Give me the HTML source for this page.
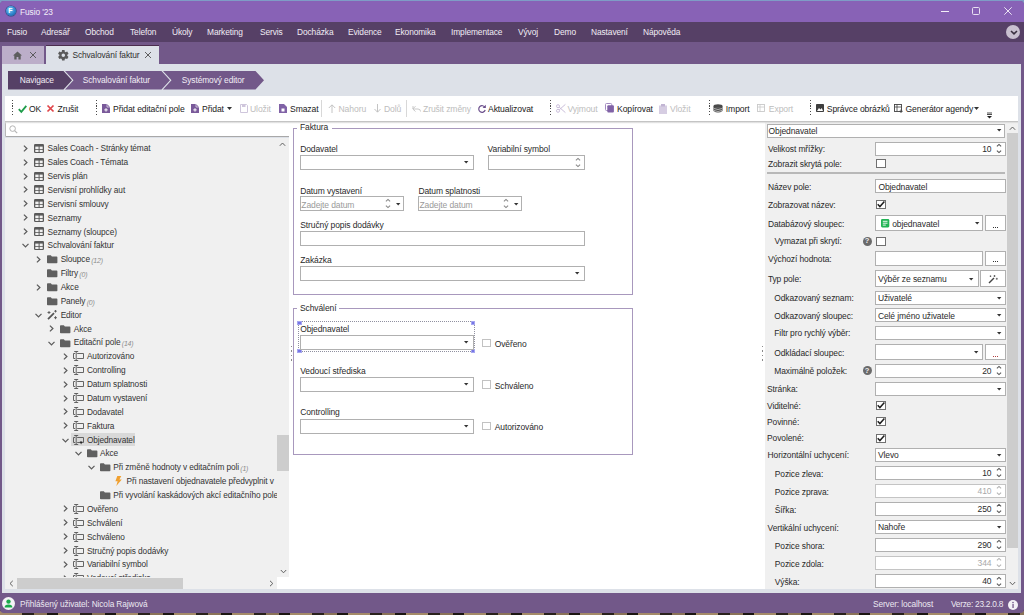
<!DOCTYPE html>
<html><head><meta charset="utf-8"><style>
*{box-sizing:border-box;margin:0;padding:0}
html,body{width:1024px;height:615px;overflow:hidden;background:linear-gradient(#82a6d0 0,#82a6d0 8px,#3b3028 8px)}
body{font-family:"Liberation Sans",sans-serif;font-size:8.3px;letter-spacing:-0.1px;color:#1e1e1e;position:relative}
.a{position:absolute}
.t{position:absolute;white-space:nowrap;line-height:10px}
svg{position:absolute;overflow:visible}
</style></head><body>
<div class="a" style="left:0px;top:0px;width:1024px;height:2px;background:#7f9cc6;"></div>
<div class="a" style="left:0px;top:611px;width:1024px;height:4px;background:repeating-linear-gradient(90deg,#a48a68 0 22px,#2a221c 22px 34px,#8a7258 34px 47px,#1c1612 47px 58px);"></div>
<div class="a" style="left:0;top:1px;width:1024px;height:612px;background:#725889;border-radius:4px;overflow:hidden">
</div>
<div class="a" style="left:0px;top:1px;width:1024px;height:21px;background:#8862b6;border-radius:4px 4px 0 0"></div>
<div class="a" style="left:5.5px;top:6px;width:10px;height:10px;border-radius:50%;background:radial-gradient(circle at 40% 35%,#7cc8f5,#2a80c8 60%,#17508a);box-shadow:0 0 0 0.6px #1d4e7c;"></div>
<div class="t" style="left:8.3px;top:6.45px;color:#fff;font-size:7px;font-weight:bold">F</div>
<div class="t" style="left:20px;top:6.55px;color:#f3eff8;font-size:8.4px;">Fusio '23</div>
<div class="a" style="left:941px;top:11px;width:7.5px;height:1px;background:#f3eff8;"></div>
<div class="a" style="left:972.2px;top:7.2px;width:7.8px;height:7.6px;border:1px solid #e8e0f2;border-radius:1.6px"></div>
<svg style="left:1004px;top:6.9px" width="8" height="8"><path d="M0.3 0.3L7.7 7.7M7.7 0.3L0.3 7.7" stroke="#ebe4f3" stroke-width="1"/></svg>
<div class="a" style="left:0px;top:22px;width:1024px;height:20px;background:#564066;"></div>
<div class="t" style="left:7px;top:26.85px;color:#f1edf5;font-size:8.4px;">Fusio</div>
<div class="t" style="left:41px;top:26.85px;color:#f1edf5;font-size:8.4px;">Adresář</div>
<div class="t" style="left:85px;top:26.85px;color:#f1edf5;font-size:8.4px;">Obchod</div>
<div class="t" style="left:130px;top:26.85px;color:#f1edf5;font-size:8.4px;">Telefon</div>
<div class="t" style="left:172px;top:26.85px;color:#f1edf5;font-size:8.4px;">Úkoly</div>
<div class="t" style="left:207px;top:26.85px;color:#f1edf5;font-size:8.4px;">Marketing</div>
<div class="t" style="left:260px;top:26.85px;color:#f1edf5;font-size:8.4px;">Servis</div>
<div class="t" style="left:297px;top:26.85px;color:#f1edf5;font-size:8.4px;">Docházka</div>
<div class="t" style="left:348px;top:26.85px;color:#f1edf5;font-size:8.4px;">Evidence</div>
<div class="t" style="left:395px;top:26.85px;color:#f1edf5;font-size:8.4px;">Ekonomika</div>
<div class="t" style="left:451px;top:26.85px;color:#f1edf5;font-size:8.4px;">Implementace</div>
<div class="t" style="left:518px;top:26.85px;color:#f1edf5;font-size:8.4px;">Vývoj</div>
<div class="t" style="left:554px;top:26.85px;color:#f1edf5;font-size:8.4px;">Demo</div>
<div class="t" style="left:591px;top:26.85px;color:#f1edf5;font-size:8.4px;">Nastavení</div>
<div class="t" style="left:643px;top:26.85px;color:#f1edf5;font-size:8.4px;">Nápověda</div>
<div class="a" style="left:1006px;top:25px;width:14px;height:14px;border-radius:50%;background:#c9c0d0"></div>
<svg style="left:1009.5px;top:30.2px" width="8" height="5"><path d="M1 1L4 3.8L7 1" stroke="#3a3040" stroke-width="1.6" fill="none"/></svg>
<div class="a" style="left:0px;top:42px;width:1024px;height:22px;background:#725889;"></div>
<div class="a" style="left:2px;top:46px;width:42px;height:18px;background:#bcaec9;"></div>
<svg style="left:13px;top:50.8px" width="9" height="9"><path d="M4.5 0.5L0 4.5H1.3V8.5H3.6V6H5.4V8.5H7.7V4.5H9Z" fill="#5d5d5d"/></svg>
<svg style="left:29.5px;top:52.2px" width="6" height="6"><path d="M0 0L6 6M6 0L0 6" stroke="#505050" stroke-width="0.9"/></svg>
<div class="a" style="left:46px;top:45px;width:113px;height:19px;background:#dde1e8;border-top:1.5px solid #4b2d4e"></div>
<svg style="left:57.8px;top:49.8px" width="10.6" height="10.6" viewBox="2.4 2.4 19.2 19.2"><path fill="#5a5a5a" d="M19.14 12.94c.04-.3.06-.61.06-.94 0-.32-.02-.64-.07-.94l2.03-1.58a.49.49 0 0 0 .12-.61l-1.92-3.32a.49.49 0 0 0-.59-.22l-2.39.96c-.5-.38-1.03-.7-1.62-.94L14.4 2.81a.48.48 0 0 0-.48-.41h-3.84a.47.47 0 0 0-.47.41L9.25 5.35c-.59.24-1.13.57-1.62.94l-2.39-.96a.48.48 0 0 0-.59.22L2.74 8.87a.47.47 0 0 0 .12.61l2.03 1.58c-.05.3-.09.63-.09.94s.02.64.07.94l-2.03 1.58a.49.49 0 0 0-.12.61l1.92 3.32c.12.22.37.29.59.22l2.39-.96c.5.38 1.03.7 1.62.94l.36 2.54c.05.24.24.41.48.41h3.84c.24 0 .44-.17.47-.41l.36-2.54c.59-.24 1.13-.56 1.62-.94l2.39.96c.22.08.47 0 .59-.22l1.92-3.32a.47.47 0 0 0-.12-.61zM12 15.2a3.2 3.2 0 1 1 0-6.4 3.2 3.2 0 0 1 0 6.4z"/></svg>
<div class="t" style="left:72.4px;top:49.95px;color:#303030;font-size:8.4px;">Schvalování faktur</div>
<svg style="left:145px;top:52px" width="6" height="6"><path d="M0 0L6 6M6 0L0 6" stroke="#505050" stroke-width="0.9"/></svg>
<div class="a" style="left:2px;top:64px;width:1019px;height:529px;background:#dde1e8;"></div>
<div class="a" style="left:0px;top:593px;width:1024px;height:20px;background:#725889;border-radius:0 0 7px 7px"></div>
<div class="a" style="left:2px;top:597px;width:13px;height:13px;border-radius:50%;background:#f4f2f6"></div>
<svg style="left:4px;top:599px" width="9" height="9"><circle cx="4.5" cy="2.6" r="2.2" fill="#1aa94a"/><path d="M0.6 8.6Q0.6 5.6 4.5 5.6Q8.4 5.6 8.4 8.6Z" fill="#1aa94a"/></svg>
<div class="t" style="left:20px;top:599.35px;color:#ece8f1;font-size:8.3px;">Přihlášený uživatel: Nicola Rajwová</div>
<div class="t" style="left:873px;top:599.35px;color:#ece8f1;font-size:8.3px;">Server: localhost</div>
<div class="t" style="left:951px;top:599.35px;color:#ece8f1;font-size:8.3px;letter-spacing:-0.25px">Verze: 23.2.0.8</div>
<div class="a" style="left:1007.5px;top:599.5px;width:10px;height:10px;border-radius:50%;background:#f4f2f6"></div>
<svg style="left:1007.5px;top:599.5px" width="10" height="10"><rect x="4.4" y="4" width="1.3" height="4" fill="#725889"/><circle cx="5" cy="2.6" r="0.8" fill="#725889"/></svg>
<svg style="left:0;top:0" width="300" height="100"><path d="M8 71H63.5L72 80.25L63.5 89.5H8Z" fill="#564066"/><path d="M65 71H161.5L170 80.25L161.5 89.5H65L73.5 80.25Z" fill="#725889"/><path d="M163 71H255.5L264 80.25L255.5 89.5H163L171.5 80.25Z" fill="#725889"/></svg>
<div class="t" style="left:19.8px;top:74.95px;color:#f1edf5;font-size:8.4px;">Navigace</div>
<div class="t" style="left:82.8px;top:74.95px;color:#f1edf5;font-size:8.4px;">Schvalování faktur</div>
<div class="t" style="left:181.8px;top:74.95px;color:#f1edf5;font-size:8.4px;">Systémový editor</div>
<div class="a" style="left:5px;top:96px;width:1013px;height:25px;background:#ffffff;"></div>
<div class="a" style="left:11.5px;top:100px;width:1.1px;height:16px;background:repeating-linear-gradient(#4a4a4a 0 1.1px,transparent 1.1px 2.7px)"></div>
<div class="a" style="left:96.0px;top:100px;width:1.1px;height:16px;background:repeating-linear-gradient(#4a4a4a 0 1.1px,transparent 1.1px 2.7px)"></div>
<div class="a" style="left:550.3px;top:100px;width:1.1px;height:16px;background:repeating-linear-gradient(#4a4a4a 0 1.1px,transparent 1.1px 2.7px)"></div>
<div class="a" style="left:708.5px;top:100px;width:1.1px;height:16px;background:repeating-linear-gradient(#4a4a4a 0 1.1px,transparent 1.1px 2.7px)"></div>
<div class="a" style="left:809.5px;top:100px;width:1.1px;height:16px;background:repeating-linear-gradient(#4a4a4a 0 1.1px,transparent 1.1px 2.7px)"></div>
<div class="a" style="left:321px;top:100px;width:1px;height:17px;background:#d8d8d8;"></div>
<div class="a" style="left:406px;top:100px;width:1px;height:17px;background:#d8d8d8;"></div>
<svg style="left:17.5px;top:104.5px" width="9" height="8"><path d="M0.8 4.2L3.3 6.8L8.3 0.8" stroke="#1f9d4a" stroke-width="1.8" fill="none"/></svg>
<div class="t" style="left:29px;top:103.75px;color:#222;font-size:8.6px;">OK</div>
<svg style="left:47px;top:105px" width="7" height="7"><path d="M0.5 0.5L6.5 6.5M6.5 0.5L0.5 6.5" stroke="#e0454a" stroke-width="1.7"/></svg>
<div class="t" style="left:57.5px;top:103.75px;color:#222;font-size:8.6px;">Zrušit</div>
<svg style="left:102px;top:104px" width="8" height="9"><path d="M0 0H5L8 3V9H0Z" fill="#7a5a9a"/><path d="M5 0V3H8" fill="none" stroke="#fff" stroke-width="0.6"/><path d="M4 4.2V7.6M2.3 5.9H5.7" stroke="#fff" stroke-width="1"/></svg>
<div class="t" style="left:113px;top:103.75px;color:#222;font-size:8.6px;">Přidat editační pole</div>
<svg style="left:191px;top:104px" width="8" height="9"><path d="M0 0H5L8 3V9H0Z" fill="#7a5a9a"/><path d="M5 0V3H8" fill="none" stroke="#fff" stroke-width="0.6"/><path d="M4 4.2V7.6M2.3 5.9H5.7" stroke="#fff" stroke-width="1"/></svg>
<div class="t" style="left:202px;top:103.75px;color:#222;font-size:8.6px;">Přidat</div>
<svg style="left:227px;top:107px" width="5" height="3"><path d="M0 0H5L2.5 3Z" fill="#333"/></svg>
<svg style="left:240px;top:104px" width="8" height="9"><path d="M0.5 0.5H6.5L7.5 1.5V8.5H0.5Z" fill="none" stroke="#cfc6dc" stroke-width="1"/><rect x="2" y="0.5" width="3.5" height="2.5" fill="#cfc6dc"/></svg>
<div class="t" style="left:250px;top:103.75px;color:#bdbdbd;font-size:8.6px;">Uložit</div>
<svg style="left:279px;top:104px" width="8" height="9"><path d="M0 0H5L8 3V9H0Z" fill="#8062a6"/><rect x="2.5" y="4.5" width="3" height="3" fill="#fff"/></svg>
<div class="t" style="left:290px;top:103.75px;color:#222;font-size:8.6px;">Smazat</div>
<svg style="left:328px;top:104px" width="8" height="9"><path d="M4 9V1M0.8 4L4 0.8L7.2 4" stroke="#bdbdbd" stroke-width="0.9" fill="none"/></svg>
<div class="t" style="left:338.5px;top:103.75px;color:#bdbdbd;font-size:8.6px;">Nahoru</div>
<svg style="left:373.5px;top:104px" width="7" height="9"><path d="M3.5 0V8M0.5 5L3.5 8.2L6.5 5" stroke="#bdbdbd" stroke-width="0.9" fill="none"/></svg>
<div class="t" style="left:384px;top:103.75px;color:#bdbdbd;font-size:8.6px;">Dolů</div>
<svg style="left:411.5px;top:105px" width="9" height="7"><path d="M1 1V4H6Q8.5 4 8.5 6.5M0.8 4L3.5 1.2M0.8 4L3.5 6.5" stroke="#c3c3c3" stroke-width="0.9" fill="none"/></svg>
<div class="t" style="left:423px;top:103.75px;color:#bdbdbd;font-size:8.6px;">Zrušit změny</div>
<svg style="left:477.5px;top:104px" width="8" height="9"><path d="M7 3.5A3.3 3.3 0 1 0 7.2 6" stroke="#6b4f8c" stroke-width="1.2" fill="none"/><path d="M7.8 0.8V4H4.6Z" fill="#6b4f8c"/></svg>
<div class="t" style="left:488px;top:103.75px;color:#222;font-size:8.6px;">Aktualizovat</div>
<svg style="left:556px;top:103.8px" width="10" height="9"><circle cx="2" cy="2.2" r="1.5" stroke="#cbbfdb" fill="none" stroke-width="1"/><circle cx="2" cy="6.8" r="1.5" stroke="#cbbfdb" fill="none" stroke-width="1"/><path d="M3.2 3.2L9.4 8.6M3.2 5.8L9.4 0.4" stroke="#cbbfdb" stroke-width="1"/></svg>
<div class="t" style="left:567.5px;top:103.75px;color:#bdbdbd;font-size:8.6px;">Vyjmout</div>
<svg style="left:605px;top:103.2px" width="10" height="10"><rect x="0.5" y="0.5" width="6.2" height="7" rx="1" fill="none" stroke="#a48cc2" stroke-width="1"/><rect x="2.3" y="2.3" width="6.6" height="7.2" rx="1" fill="#8062a6"/></svg>
<div class="t" style="left:617px;top:103.75px;color:#222;font-size:8.6px;">Kopírovat</div>
<svg style="left:659px;top:103.5px" width="8" height="10"><rect x="0" y="1.5" width="8" height="8.5" fill="#d6cde2"/><rect x="2" y="0" width="4" height="2.5" fill="#c2b5d3"/></svg>
<div class="t" style="left:670px;top:103.75px;color:#bdbdbd;font-size:8.6px;">Vložit</div>
<svg style="left:713px;top:104px" width="10" height="9"><ellipse cx="5" cy="2" rx="4.5" ry="1.8" fill="#4a4a4a"/><path d="M0.5 2V7Q5 10 9.5 7V2Q5 5 0.5 2Z" fill="#4a4a4a"/><path d="M1 4.5Q5 6.5 9 4.5M1 6.5Q5 8.5 9 6.5" stroke="#fff" stroke-width="0.6" fill="none"/></svg>
<div class="t" style="left:725.8px;top:103.75px;color:#222;font-size:8.6px;">Import</div>
<svg style="left:757px;top:104px" width="9" height="9"><rect x="0.5" y="0.5" width="7" height="7" fill="none" stroke="#c9c9c9" stroke-width="0.9"/><path d="M0.5 3H7.5M3 0.5V7.5" stroke="#c9c9c9" stroke-width="0.8"/></svg>
<div class="t" style="left:768.8px;top:103.75px;color:#bdbdbd;font-size:8.6px;">Export</div>
<svg style="left:815.5px;top:104px" width="8" height="8"><rect x="0" y="0" width="8" height="8" rx="0.8" fill="#3e3e3e"/><path d="M1 7L3 4L4.5 5.5L5.8 4L7 7Z" fill="#fff"/></svg>
<div class="t" style="left:826.8px;top:103.75px;color:#222;font-size:8.6px;">Správce obrázků</div>
<svg style="left:893.8px;top:104px" width="9" height="9"><rect x="0.5" y="0.5" width="7" height="7" fill="none" stroke="#444" stroke-width="0.9"/><path d="M0.5 3H7.5M3 0.5V7.5" stroke="#444" stroke-width="0.8"/><path d="M7 5.5V9M5.3 7.3H8.7" stroke="#444" stroke-width="0.9"/></svg>
<div class="t" style="left:905.5px;top:103.75px;color:#222;font-size:8.6px;">Generátor agendy</div>
<svg style="left:973.5px;top:107px" width="5" height="3"><path d="M0 0H5L2.5 3Z" fill="#333"/></svg>
<svg style="left:986.5px;top:112.5px" width="5" height="6"><path d="M0 0H5M0 1.5H5" stroke="#222" stroke-width="0.8"/><path d="M0 3H5L2.5 5.5Z" fill="#222"/></svg>
<div class="a" style="left:5px;top:121px;width:284.5px;height:16px;background:#ffffff;border:1px solid #b8b8b8;border-bottom:1.4px solid #a8a8a8;border-radius:1.5px"></div>
<svg style="left:9px;top:125px" width="9" height="9"><circle cx="3.6" cy="3.6" r="2.8" stroke="#b4b4b4" stroke-width="1" fill="none"/><path d="M5.6 5.6L8.2 8.2" stroke="#b4b4b4" stroke-width="1.2"/></svg>
<div class="a" style="left:5px;top:138px;width:284px;height:451px;background:#f0f0f0;"></div>
<div class="a" style="left:5px;top:138px;width:272px;height:439px;overflow:hidden">
<div class="a" style="left:-5px;top:-138px;width:300px;height:600px">
<svg style="left:23.1px;top:144.8px" width="5" height="7"><path d="M0.9 0.6L3.9 3.5L0.9 6.4" stroke="#5c5c5c" stroke-width="1.25" fill="none"/></svg>
<svg style="left:34.0px;top:143.8px" width="10" height="9"><rect x="0" y="0" width="10" height="9" rx="1.2" fill="#5a5a5a"/><rect x="1.3" y="2.6" width="3.3" height="2.4" fill="#f0f0f0"/><rect x="5.6" y="2.6" width="3.1" height="2.4" fill="#f0f0f0"/><rect x="1.3" y="5.8" width="3.3" height="2.2" fill="#f0f0f0"/><rect x="5.6" y="5.8" width="3.1" height="2.2" fill="#f0f0f0"/></svg>
<div class="t" style="left:47.5px;top:143.30px;color:#333;font-size:8.3px;">Sales Coach - Stránky témat</div>
<svg style="left:23.1px;top:158.7px" width="5" height="7"><path d="M0.9 0.6L3.9 3.5L0.9 6.4" stroke="#5c5c5c" stroke-width="1.25" fill="none"/></svg>
<svg style="left:34.0px;top:157.7px" width="10" height="9"><rect x="0" y="0" width="10" height="9" rx="1.2" fill="#5a5a5a"/><rect x="1.3" y="2.6" width="3.3" height="2.4" fill="#f0f0f0"/><rect x="5.6" y="2.6" width="3.1" height="2.4" fill="#f0f0f0"/><rect x="1.3" y="5.8" width="3.3" height="2.2" fill="#f0f0f0"/><rect x="5.6" y="5.8" width="3.1" height="2.2" fill="#f0f0f0"/></svg>
<div class="t" style="left:47.5px;top:157.17px;color:#333;font-size:8.3px;">Sales Coach - Témata</div>
<svg style="left:23.1px;top:172.5px" width="5" height="7"><path d="M0.9 0.6L3.9 3.5L0.9 6.4" stroke="#5c5c5c" stroke-width="1.25" fill="none"/></svg>
<svg style="left:34.0px;top:171.5px" width="10" height="9"><rect x="0" y="0" width="10" height="9" rx="1.2" fill="#5a5a5a"/><rect x="1.3" y="2.6" width="3.3" height="2.4" fill="#f0f0f0"/><rect x="5.6" y="2.6" width="3.1" height="2.4" fill="#f0f0f0"/><rect x="1.3" y="5.8" width="3.3" height="2.2" fill="#f0f0f0"/><rect x="5.6" y="5.8" width="3.1" height="2.2" fill="#f0f0f0"/></svg>
<div class="t" style="left:47.5px;top:171.04px;color:#333;font-size:8.3px;">Servis plán</div>
<svg style="left:23.1px;top:186.4px" width="5" height="7"><path d="M0.9 0.6L3.9 3.5L0.9 6.4" stroke="#5c5c5c" stroke-width="1.25" fill="none"/></svg>
<svg style="left:34.0px;top:185.4px" width="10" height="9"><rect x="0" y="0" width="10" height="9" rx="1.2" fill="#5a5a5a"/><rect x="1.3" y="2.6" width="3.3" height="2.4" fill="#f0f0f0"/><rect x="5.6" y="2.6" width="3.1" height="2.4" fill="#f0f0f0"/><rect x="1.3" y="5.8" width="3.3" height="2.2" fill="#f0f0f0"/><rect x="5.6" y="5.8" width="3.1" height="2.2" fill="#f0f0f0"/></svg>
<div class="t" style="left:47.5px;top:184.91px;color:#333;font-size:8.3px;">Servisní prohlídky aut</div>
<svg style="left:23.1px;top:200.3px" width="5" height="7"><path d="M0.9 0.6L3.9 3.5L0.9 6.4" stroke="#5c5c5c" stroke-width="1.25" fill="none"/></svg>
<svg style="left:34.0px;top:199.3px" width="10" height="9"><rect x="0" y="0" width="10" height="9" rx="1.2" fill="#5a5a5a"/><rect x="1.3" y="2.6" width="3.3" height="2.4" fill="#f0f0f0"/><rect x="5.6" y="2.6" width="3.1" height="2.4" fill="#f0f0f0"/><rect x="1.3" y="5.8" width="3.3" height="2.2" fill="#f0f0f0"/><rect x="5.6" y="5.8" width="3.1" height="2.2" fill="#f0f0f0"/></svg>
<div class="t" style="left:47.5px;top:198.78px;color:#333;font-size:8.3px;">Servisní smlouvy</div>
<svg style="left:23.1px;top:214.2px" width="5" height="7"><path d="M0.9 0.6L3.9 3.5L0.9 6.4" stroke="#5c5c5c" stroke-width="1.25" fill="none"/></svg>
<svg style="left:34.0px;top:213.2px" width="10" height="9"><rect x="0" y="0" width="10" height="9" rx="1.2" fill="#5a5a5a"/><rect x="1.3" y="2.6" width="3.3" height="2.4" fill="#f0f0f0"/><rect x="5.6" y="2.6" width="3.1" height="2.4" fill="#f0f0f0"/><rect x="1.3" y="5.8" width="3.3" height="2.2" fill="#f0f0f0"/><rect x="5.6" y="5.8" width="3.1" height="2.2" fill="#f0f0f0"/></svg>
<div class="t" style="left:47.5px;top:212.65px;color:#333;font-size:8.3px;">Seznamy</div>
<svg style="left:23.1px;top:228.0px" width="5" height="7"><path d="M0.9 0.6L3.9 3.5L0.9 6.4" stroke="#5c5c5c" stroke-width="1.25" fill="none"/></svg>
<svg style="left:34.0px;top:227.0px" width="10" height="9"><rect x="0" y="0" width="10" height="9" rx="1.2" fill="#5a5a5a"/><rect x="1.3" y="2.6" width="3.3" height="2.4" fill="#f0f0f0"/><rect x="5.6" y="2.6" width="3.1" height="2.4" fill="#f0f0f0"/><rect x="1.3" y="5.8" width="3.3" height="2.2" fill="#f0f0f0"/><rect x="5.6" y="5.8" width="3.1" height="2.2" fill="#f0f0f0"/></svg>
<div class="t" style="left:47.5px;top:226.52px;color:#333;font-size:8.3px;">Seznamy (sloupce)</div>
<svg style="left:22.1px;top:243.4px" width="7" height="5"><path d="M0.5 0.9L3.5 3.9L6.5 0.9" stroke="#5c5c5c" stroke-width="1.25" fill="none"/></svg>
<svg style="left:34.0px;top:240.9px" width="10" height="9"><rect x="0" y="0" width="10" height="9" rx="1.2" fill="#5a5a5a"/><rect x="1.3" y="2.6" width="3.3" height="2.4" fill="#f0f0f0"/><rect x="5.6" y="2.6" width="3.1" height="2.4" fill="#f0f0f0"/><rect x="1.3" y="5.8" width="3.3" height="2.2" fill="#f0f0f0"/><rect x="5.6" y="5.8" width="3.1" height="2.2" fill="#f0f0f0"/></svg>
<div class="t" style="left:47.5px;top:240.39px;color:#333;font-size:8.3px;">Schvalování faktur</div>
<svg style="left:36.25px;top:255.8px" width="5" height="7"><path d="M0.9 0.6L3.9 3.5L0.9 6.4" stroke="#5c5c5c" stroke-width="1.25" fill="none"/></svg>
<svg style="left:47.15px;top:255.3px" width="10.4" height="8.2"><path d="M0.8 0.3H3.8L4.9 1.5H9.6Q10.4 1.5 10.4 2.3V7.4Q10.4 8.2 9.6 8.2H0.8Q0 8.2 0 7.4V1.1Q0 0.3 0.8 0.3Z" fill="#606060"/></svg>
<div class="t" style="left:60.65px;top:254.26px;color:#333;font-size:8.3px;">Sloupce <i style="color:#8c8c8c;font-size:6.9px;margin-left:-1px;position:relative;top:0.8px">(12)</i></div>
<svg style="left:47.15px;top:269.1px" width="10.4" height="8.2"><path d="M0.8 0.3H3.8L4.9 1.5H9.6Q10.4 1.5 10.4 2.3V7.4Q10.4 8.2 9.6 8.2H0.8Q0 8.2 0 7.4V1.1Q0 0.3 0.8 0.3Z" fill="#606060"/></svg>
<div class="t" style="left:60.65px;top:268.13px;color:#333;font-size:8.3px;">Filtry <i style="color:#8c8c8c;font-size:6.9px;margin-left:-1px;position:relative;top:0.8px">(0)</i></div>
<svg style="left:36.25px;top:283.5px" width="5" height="7"><path d="M0.9 0.6L3.9 3.5L0.9 6.4" stroke="#5c5c5c" stroke-width="1.25" fill="none"/></svg>
<svg style="left:47.15px;top:283.0px" width="10.4" height="8.2"><path d="M0.8 0.3H3.8L4.9 1.5H9.6Q10.4 1.5 10.4 2.3V7.4Q10.4 8.2 9.6 8.2H0.8Q0 8.2 0 7.4V1.1Q0 0.3 0.8 0.3Z" fill="#606060"/></svg>
<div class="t" style="left:60.65px;top:282.00px;color:#333;font-size:8.3px;">Akce</div>
<svg style="left:47.15px;top:296.9px" width="10.4" height="8.2"><path d="M0.8 0.3H3.8L4.9 1.5H9.6Q10.4 1.5 10.4 2.3V7.4Q10.4 8.2 9.6 8.2H0.8Q0 8.2 0 7.4V1.1Q0 0.3 0.8 0.3Z" fill="#606060"/></svg>
<div class="t" style="left:60.65px;top:295.87px;color:#333;font-size:8.3px;">Panely <i style="color:#8c8c8c;font-size:6.9px;margin-left:-1px;position:relative;top:0.8px">(0)</i></div>
<svg style="left:35.25px;top:312.7px" width="7" height="5"><path d="M0.5 0.9L3.5 3.9L6.5 0.9" stroke="#5c5c5c" stroke-width="1.25" fill="none"/></svg>
<svg style="left:47.15px;top:309.7px" width="11" height="10"><path d="M1 9.2L7 3.2" stroke="#555" stroke-width="1.8"/><path d="M2 1V4M0.5 2.5H3.5M8.5 0V2.5M7.2 1.2H9.8M8.5 6.2V9.2M7 7.7H10" stroke="#555" stroke-width="0.9"/></svg>
<div class="t" style="left:60.65px;top:309.74px;color:#333;font-size:8.3px;">Editor</div>
<svg style="left:49.4px;top:325.1px" width="5" height="7"><path d="M0.9 0.6L3.9 3.5L0.9 6.4" stroke="#5c5c5c" stroke-width="1.25" fill="none"/></svg>
<svg style="left:60.3px;top:324.6px" width="10.4" height="8.2"><path d="M0.8 0.3H3.8L4.9 1.5H9.6Q10.4 1.5 10.4 2.3V7.4Q10.4 8.2 9.6 8.2H0.8Q0 8.2 0 7.4V1.1Q0 0.3 0.8 0.3Z" fill="#606060"/></svg>
<div class="t" style="left:73.8px;top:323.61px;color:#333;font-size:8.3px;">Akce</div>
<svg style="left:48.4px;top:340.5px" width="7" height="5"><path d="M0.5 0.9L3.5 3.9L6.5 0.9" stroke="#5c5c5c" stroke-width="1.25" fill="none"/></svg>
<svg style="left:60.3px;top:338.5px" width="10.4" height="8.2"><path d="M0.8 0.3H3.8L4.9 1.5H9.6Q10.4 1.5 10.4 2.3V7.4Q10.4 8.2 9.6 8.2H0.8Q0 8.2 0 7.4V1.1Q0 0.3 0.8 0.3Z" fill="#606060"/></svg>
<div class="t" style="left:73.8px;top:337.48px;color:#333;font-size:8.3px;">Editační pole <i style="color:#8c8c8c;font-size:6.9px;margin-left:-1px;position:relative;top:0.8px">(14)</i></div>
<svg style="left:62.55px;top:352.9px" width="5" height="7"><path d="M0.9 0.6L3.9 3.5L0.9 6.4" stroke="#5c5c5c" stroke-width="1.25" fill="none"/></svg>
<svg style="left:73.45px;top:351.4px" width="11" height="10"><path d="M1.2 0.5H5.2M3.2 0.5V9.5M1.2 9.5H5.2" stroke="#555" stroke-width="0.9" fill="none"/><path d="M2.2 2.5H0.5V7.5H2.2M4.2 2.5H10.5V7.5H4.2" stroke="#555" stroke-width="0.9" fill="none"/></svg>
<div class="t" style="left:86.95px;top:351.35px;color:#333;font-size:8.3px;">Autorizováno</div>
<svg style="left:62.55px;top:366.7px" width="5" height="7"><path d="M0.9 0.6L3.9 3.5L0.9 6.4" stroke="#5c5c5c" stroke-width="1.25" fill="none"/></svg>
<svg style="left:73.45px;top:365.2px" width="11" height="10"><path d="M1.2 0.5H5.2M3.2 0.5V9.5M1.2 9.5H5.2" stroke="#555" stroke-width="0.9" fill="none"/><path d="M2.2 2.5H0.5V7.5H2.2M4.2 2.5H10.5V7.5H4.2" stroke="#555" stroke-width="0.9" fill="none"/></svg>
<div class="t" style="left:86.95px;top:365.22px;color:#333;font-size:8.3px;">Controlling</div>
<svg style="left:62.55px;top:380.6px" width="5" height="7"><path d="M0.9 0.6L3.9 3.5L0.9 6.4" stroke="#5c5c5c" stroke-width="1.25" fill="none"/></svg>
<svg style="left:73.45px;top:379.1px" width="11" height="10"><path d="M1.2 0.5H5.2M3.2 0.5V9.5M1.2 9.5H5.2" stroke="#555" stroke-width="0.9" fill="none"/><path d="M2.2 2.5H0.5V7.5H2.2M4.2 2.5H10.5V7.5H4.2" stroke="#555" stroke-width="0.9" fill="none"/></svg>
<div class="t" style="left:86.95px;top:379.09px;color:#333;font-size:8.3px;">Datum splatnosti</div>
<svg style="left:62.55px;top:394.5px" width="5" height="7"><path d="M0.9 0.6L3.9 3.5L0.9 6.4" stroke="#5c5c5c" stroke-width="1.25" fill="none"/></svg>
<svg style="left:73.45px;top:393.0px" width="11" height="10"><path d="M1.2 0.5H5.2M3.2 0.5V9.5M1.2 9.5H5.2" stroke="#555" stroke-width="0.9" fill="none"/><path d="M2.2 2.5H0.5V7.5H2.2M4.2 2.5H10.5V7.5H4.2" stroke="#555" stroke-width="0.9" fill="none"/></svg>
<div class="t" style="left:86.95px;top:392.96px;color:#333;font-size:8.3px;">Datum vystavení</div>
<svg style="left:62.55px;top:408.3px" width="5" height="7"><path d="M0.9 0.6L3.9 3.5L0.9 6.4" stroke="#5c5c5c" stroke-width="1.25" fill="none"/></svg>
<svg style="left:73.45px;top:406.8px" width="11" height="10"><path d="M1.2 0.5H5.2M3.2 0.5V9.5M1.2 9.5H5.2" stroke="#555" stroke-width="0.9" fill="none"/><path d="M2.2 2.5H0.5V7.5H2.2M4.2 2.5H10.5V7.5H4.2" stroke="#555" stroke-width="0.9" fill="none"/></svg>
<div class="t" style="left:86.95px;top:406.83px;color:#333;font-size:8.3px;">Dodavatel</div>
<svg style="left:62.55px;top:422.2px" width="5" height="7"><path d="M0.9 0.6L3.9 3.5L0.9 6.4" stroke="#5c5c5c" stroke-width="1.25" fill="none"/></svg>
<svg style="left:73.45px;top:420.7px" width="11" height="10"><path d="M1.2 0.5H5.2M3.2 0.5V9.5M1.2 9.5H5.2" stroke="#555" stroke-width="0.9" fill="none"/><path d="M2.2 2.5H0.5V7.5H2.2M4.2 2.5H10.5V7.5H4.2" stroke="#555" stroke-width="0.9" fill="none"/></svg>
<div class="t" style="left:86.95px;top:420.70px;color:#333;font-size:8.3px;">Faktura</div>
<div class="a" style="left:71.4px;top:433.0px;width:64px;height:13.4px;background:#d9d9d9;"></div>
<svg style="left:61.55px;top:437.6px" width="7" height="5"><path d="M0.5 0.9L3.5 3.9L6.5 0.9" stroke="#5c5c5c" stroke-width="1.25" fill="none"/></svg>
<svg style="left:73.45px;top:434.6px" width="11" height="10"><path d="M1.2 0.5H5.2M3.2 0.5V9.5M1.2 9.5H5.2" stroke="#555" stroke-width="0.9" fill="none"/><path d="M2.2 2.5H0.5V7.5H2.2M4.2 2.5H10.5V7.5H4.2" stroke="#555" stroke-width="0.9" fill="none"/><path d="M6.8 6.6L9.4 6.6L8.1 9.4Z" fill="#222"/></svg>
<div class="t" style="left:86.95px;top:434.57px;color:#333;font-size:8.3px;">Objednavatel</div>
<svg style="left:74.7px;top:451.4px" width="7" height="5"><path d="M0.5 0.9L3.5 3.9L6.5 0.9" stroke="#5c5c5c" stroke-width="1.25" fill="none"/></svg>
<svg style="left:86.6px;top:449.4px" width="10.4" height="8.2"><path d="M0.8 0.3H3.8L4.9 1.5H9.6Q10.4 1.5 10.4 2.3V7.4Q10.4 8.2 9.6 8.2H0.8Q0 8.2 0 7.4V1.1Q0 0.3 0.8 0.3Z" fill="#606060"/></svg>
<div class="t" style="left:100.1px;top:448.44px;color:#333;font-size:8.3px;">Akce</div>
<svg style="left:87.85px;top:465.3px" width="7" height="5"><path d="M0.5 0.9L3.5 3.9L6.5 0.9" stroke="#5c5c5c" stroke-width="1.25" fill="none"/></svg>
<svg style="left:99.75px;top:463.3px" width="10.4" height="8.2"><path d="M0.8 0.3H3.8L4.9 1.5H9.6Q10.4 1.5 10.4 2.3V7.4Q10.4 8.2 9.6 8.2H0.8Q0 8.2 0 7.4V1.1Q0 0.3 0.8 0.3Z" fill="#606060"/></svg>
<div class="t" style="left:113.25px;top:462.31px;color:#333;font-size:8.3px;">Při změně hodnoty v editačním poli <i style="color:#8c8c8c;font-size:6.9px;margin-left:-1px;position:relative;top:0.8px">(1)</i></div>
<svg style="left:114.7px;top:476.2px" width="7" height="10"><path d="M2.3 0H6.3L4.4 3.6H6.8L1.3 10L2.6 5.2H0.4Z" fill="#f0a030"/></svg>
<div class="t" style="left:126.6px;top:476.18px;color:#333;font-size:8.3px;">Při nastavení objednavatele předvyplnit v</div>
<svg style="left:99.75px;top:491.1px" width="10.4" height="8.2"><path d="M0.8 0.3H3.8L4.9 1.5H9.6Q10.4 1.5 10.4 2.3V7.4Q10.4 8.2 9.6 8.2H0.8Q0 8.2 0 7.4V1.1Q0 0.3 0.8 0.3Z" fill="#606060"/></svg>
<div class="t" style="left:113.25px;top:490.05px;color:#333;font-size:8.3px;">Při vyvolání kaskádových akcí editačního pole</div>
<svg style="left:62.55px;top:505.4px" width="5" height="7"><path d="M0.9 0.6L3.9 3.5L0.9 6.4" stroke="#5c5c5c" stroke-width="1.25" fill="none"/></svg>
<svg style="left:73.45px;top:503.9px" width="11" height="10"><path d="M1.2 0.5H5.2M3.2 0.5V9.5M1.2 9.5H5.2" stroke="#555" stroke-width="0.9" fill="none"/><path d="M2.2 2.5H0.5V7.5H2.2M4.2 2.5H10.5V7.5H4.2" stroke="#555" stroke-width="0.9" fill="none"/></svg>
<div class="t" style="left:86.95px;top:503.92px;color:#333;font-size:8.3px;">Ověřeno</div>
<svg style="left:62.55px;top:519.3px" width="5" height="7"><path d="M0.9 0.6L3.9 3.5L0.9 6.4" stroke="#5c5c5c" stroke-width="1.25" fill="none"/></svg>
<svg style="left:73.45px;top:517.8px" width="11" height="10"><path d="M1.2 0.5H5.2M3.2 0.5V9.5M1.2 9.5H5.2" stroke="#555" stroke-width="0.9" fill="none"/><path d="M2.2 2.5H0.5V7.5H2.2M4.2 2.5H10.5V7.5H4.2" stroke="#555" stroke-width="0.9" fill="none"/></svg>
<div class="t" style="left:86.95px;top:517.79px;color:#333;font-size:8.3px;">Schválení</div>
<svg style="left:62.55px;top:533.2px" width="5" height="7"><path d="M0.9 0.6L3.9 3.5L0.9 6.4" stroke="#5c5c5c" stroke-width="1.25" fill="none"/></svg>
<svg style="left:73.45px;top:531.7px" width="11" height="10"><path d="M1.2 0.5H5.2M3.2 0.5V9.5M1.2 9.5H5.2" stroke="#555" stroke-width="0.9" fill="none"/><path d="M2.2 2.5H0.5V7.5H2.2M4.2 2.5H10.5V7.5H4.2" stroke="#555" stroke-width="0.9" fill="none"/></svg>
<div class="t" style="left:86.95px;top:531.66px;color:#333;font-size:8.3px;">Schváleno</div>
<svg style="left:62.55px;top:547.0px" width="5" height="7"><path d="M0.9 0.6L3.9 3.5L0.9 6.4" stroke="#5c5c5c" stroke-width="1.25" fill="none"/></svg>
<svg style="left:73.45px;top:545.5px" width="11" height="10"><path d="M1.2 0.5H5.2M3.2 0.5V9.5M1.2 9.5H5.2" stroke="#555" stroke-width="0.9" fill="none"/><path d="M2.2 2.5H0.5V7.5H2.2M4.2 2.5H10.5V7.5H4.2" stroke="#555" stroke-width="0.9" fill="none"/></svg>
<div class="t" style="left:86.95px;top:545.53px;color:#333;font-size:8.3px;">Stručný popis dodávky</div>
<svg style="left:62.55px;top:560.9px" width="5" height="7"><path d="M0.9 0.6L3.9 3.5L0.9 6.4" stroke="#5c5c5c" stroke-width="1.25" fill="none"/></svg>
<svg style="left:73.45px;top:559.4px" width="11" height="10"><path d="M1.2 0.5H5.2M3.2 0.5V9.5M1.2 9.5H5.2" stroke="#555" stroke-width="0.9" fill="none"/><path d="M2.2 2.5H0.5V7.5H2.2M4.2 2.5H10.5V7.5H4.2" stroke="#555" stroke-width="0.9" fill="none"/></svg>
<div class="t" style="left:86.95px;top:559.40px;color:#333;font-size:8.3px;">Variabilní symbol</div>
<svg style="left:62.55px;top:574.8px" width="5" height="7"><path d="M0.9 0.6L3.9 3.5L0.9 6.4" stroke="#5c5c5c" stroke-width="1.25" fill="none"/></svg>
<svg style="left:73.45px;top:573.3px" width="11" height="10"><path d="M1.2 0.5H5.2M3.2 0.5V9.5M1.2 9.5H5.2" stroke="#555" stroke-width="0.9" fill="none"/><path d="M2.2 2.5H0.5V7.5H2.2M4.2 2.5H10.5V7.5H4.2" stroke="#555" stroke-width="0.9" fill="none"/></svg>
<div class="t" style="left:86.95px;top:573.27px;color:#333;font-size:8.3px;">Vedoucí střediska</div>
</div></div>
<div class="a" style="left:277px;top:138px;width:12px;height:439px;background:#f0f0f0;"></div>
<svg style="left:279px;top:141.5px" width="7" height="5"><path d="M0.8 3.8L3.5 1L6.2 3.8" stroke="#606060" stroke-width="1" fill="none"/></svg>
<div class="a" style="left:277px;top:434.5px;width:12px;height:36.5px;background:#cdcdcd;"></div>
<svg style="left:279.5px;top:569px" width="7" height="5"><path d="M0.8 1L3.5 3.8L6.2 1" stroke="#606060" stroke-width="1" fill="none"/></svg>
<div class="a" style="left:5px;top:577px;width:272px;height:12px;background:#f0f0f0;"></div>
<svg style="left:9px;top:580px" width="5" height="7"><path d="M3.8 0.8L1 3.5L3.8 6.2" stroke="#606060" stroke-width="1" fill="none"/></svg>
<div class="a" style="left:17px;top:577.5px;width:166px;height:11px;background:#cdcdcd;"></div>
<svg style="left:268.5px;top:580px" width="5" height="7"><path d="M1 0.8L3.8 3.5L1 6.2" stroke="#606060" stroke-width="1" fill="none"/></svg>
<div class="a" style="left:277px;top:577px;width:12px;height:12px;background:#ffffff;"></div>
<div class="a" style="left:289px;top:121px;width:476px;height:468px;background:#ffffff;"></div>
<div class="a" style="left:293px;top:127.5px;width:340px;height:167.5px;border:1px solid #a898bd"></div><div class="a" style="left:297.3px;top:123.5px;width:34.6px;height:8px;background:#ffffff;"></div><div class="t" style="left:300px;top:122.15px;color:#2a2a2a;font-size:8.5px;">Faktura</div>
<div class="a" style="left:293px;top:308px;width:340px;height:147px;border:1px solid #a898bd"></div><div class="a" style="left:297.3px;top:304px;width:41.9px;height:8px;background:#ffffff;"></div><div class="t" style="left:300px;top:302.65px;color:#2a2a2a;font-size:8.5px;">Schválení</div>
<div class="t" style="left:300.2px;top:143.75px;color:#2a2a2a;font-size:8.5px;">Dodavatel</div>
<div class="a" style="left:300px;top:155px;width:173.5px;height:14.6px;background:#fff;border:1px solid #b0b0b0;"></div><svg style="left:464.0px;top:161.1px" width="5" height="3"><path d="M0 0H4.4L2.2 2.6Z" fill="#333"/></svg>
<div class="t" style="left:487.6px;top:143.75px;color:#2a2a2a;font-size:8.5px;">Variabilní symbol</div>
<div class="a" style="left:487.5px;top:155px;width:97px;height:14.6px;background:#fff;border:1px solid #b0b0b0;"></div>
<svg style="left:575px;top:158px" width="6" height="9"><path d="M0.9 2.3L3 0.4L5.1 2.3M0.9 6.7L3 8.6L5.1 6.7" stroke="#888" stroke-width="1.1" fill="none"/></svg>
<div class="t" style="left:300.2px;top:185.60px;color:#2a2a2a;font-size:8.5px;">Datum vystavení</div>
<div class="a" style="left:300px;top:196px;width:103.8px;height:15.4px;background:#fff;border:1px solid #b0b0b0;"></div>
<div class="t" style="left:301.3px;top:200.15px;color:#9a9a9a;font-size:8.5px;">Zadejte datum</div>
<svg style="left:385px;top:199px" width="6" height="9"><path d="M0.9 2.3L3 0.4L5.1 2.3M0.9 6.7L3 8.6L5.1 6.7" stroke="#888" stroke-width="1.1" fill="none"/></svg>
<svg style="left:396px;top:202.7px" width="5" height="3"><path d="M0 0H4.4L2.2 2.6Z" fill="#333"/></svg>
<div class="t" style="left:418.4px;top:185.60px;color:#2a2a2a;font-size:8.5px;">Datum splatnosti</div>
<div class="a" style="left:418.2px;top:196px;width:103.7px;height:15.4px;background:#fff;border:1px solid #b0b0b0;"></div>
<div class="t" style="left:419.5px;top:200.15px;color:#9a9a9a;font-size:8.5px;">Zadejte datum</div>
<svg style="left:503px;top:199px" width="6" height="9"><path d="M0.9 2.3L3 0.4L5.1 2.3M0.9 6.7L3 8.6L5.1 6.7" stroke="#888" stroke-width="1.1" fill="none"/></svg>
<svg style="left:514px;top:202.7px" width="5" height="3"><path d="M0 0H4.4L2.2 2.6Z" fill="#333"/></svg>
<div class="t" style="left:300.2px;top:219.85px;color:#2a2a2a;font-size:8.5px;">Stručný popis dodávky</div>
<div class="a" style="left:300px;top:231px;width:284.5px;height:15.3px;background:#fff;border:1px solid #b0b0b0;"></div>
<div class="t" style="left:300.2px;top:255.15px;color:#2a2a2a;font-size:8.5px;">Zakázka</div>
<div class="a" style="left:300px;top:266px;width:284.5px;height:14.8px;background:#fff;border:1px solid #b0b0b0;"></div><svg style="left:575.0px;top:272.2px" width="5" height="3"><path d="M0 0H4.4L2.2 2.6Z" fill="#333"/></svg>
<div class="a" style="left:298px;top:321px;width:177px;height:31px;border:1px dotted #9090a0"></div>
<div class="a" style="left:297.4px;top:320.8px;width:4.6px;height:4.6px;background:#7676e6;border:0.6px solid #a6a6f0"></div>
<div class="a" style="left:470.6px;top:320.8px;width:4.6px;height:4.6px;background:#7676e6;border:0.6px solid #a6a6f0"></div>
<div class="a" style="left:297.4px;top:348.6px;width:4.6px;height:4.6px;background:#7676e6;border:0.6px solid #a6a6f0"></div>
<div class="a" style="left:470.6px;top:348.6px;width:4.6px;height:4.6px;background:#7676e6;border:0.6px solid #a6a6f0"></div>
<div class="t" style="left:300.2px;top:323.85px;color:#2a2a2a;font-size:8.5px;">Objednavatel</div>
<div class="a" style="left:300px;top:335px;width:173.5px;height:15.2px;background:#fff;border:1px solid #b0b0b0;"></div><svg style="left:464.0px;top:341.4px" width="5" height="3"><path d="M0 0H4.4L2.2 2.6Z" fill="#333"/></svg>
<div class="a" style="left:481.8px;top:338.6px;width:9.5px;height:8.8px;background:#fff;border:1px solid #b0b0b0;border-color:#c2c2c2"></div>
<div class="t" style="left:494.7px;top:338.65px;color:#2a2a2a;font-size:8.5px;">Ověřeno</div>
<div class="t" style="left:300.2px;top:365.65px;color:#2a2a2a;font-size:8.5px;">Vedoucí střediska</div>
<div class="a" style="left:300px;top:377px;width:173.5px;height:15px;background:#fff;border:1px solid #b0b0b0;"></div><svg style="left:464.0px;top:383.3px" width="5" height="3"><path d="M0 0H4.4L2.2 2.6Z" fill="#333"/></svg>
<div class="a" style="left:481.8px;top:380.3px;width:9.5px;height:8.8px;background:#fff;border:1px solid #b0b0b0;border-color:#c2c2c2"></div>
<div class="t" style="left:494.7px;top:380.55px;color:#2a2a2a;font-size:8.5px;">Schváleno</div>
<div class="t" style="left:300.2px;top:407.45px;color:#2a2a2a;font-size:8.5px;">Controlling</div>
<div class="a" style="left:300px;top:418.5px;width:173.5px;height:15.3px;background:#fff;border:1px solid #b0b0b0;"></div><svg style="left:464.0px;top:424.9px" width="5" height="3"><path d="M0 0H4.4L2.2 2.6Z" fill="#333"/></svg>
<div class="a" style="left:481.8px;top:421.5px;width:9.5px;height:8.8px;background:#fff;border:1px solid #b0b0b0;border-color:#c2c2c2"></div>
<div class="t" style="left:494.7px;top:422.05px;color:#2a2a2a;font-size:8.5px;">Autorizováno</div>
<div class="a" style="left:290.5px;top:346px;width:1.4px;height:18px;background:repeating-linear-gradient(#8a8a8a 0 1.4px,transparent 1.4px 4.4px)"></div>
<div class="a" style="left:762px;top:346px;width:1.4px;height:18px;background:repeating-linear-gradient(#8a8a8a 0 1.4px,transparent 1.4px 4.4px)"></div>
<div class="a" style="left:765px;top:121px;width:253px;height:468px;background:#f0f0f0;"></div>
<svg style="left:1009px;top:126px" width="7" height="5"><path d="M0.8 3.8L3.5 1L6.2 3.8" stroke="#606060" stroke-width="1" fill="none"/></svg>
<div class="a" style="left:1007px;top:133px;width:11px;height:414.5px;background:#cdcdcd;"></div>
<svg style="left:1008.5px;top:580.5px" width="7" height="5"><path d="M0.8 1L3.5 3.8L6.2 1" stroke="#606060" stroke-width="1" fill="none"/></svg>
<div class="a" style="left:766.5px;top:123.5px;width:238px;height:14px;background:#fff;border:1px solid #b0b0b0;"></div>
<div class="t" style="left:768.5px;top:126.05px;color:#2a2a2a;font-size:8.5px;">Objednavatel</div>
<svg style="left:996.5px;top:129.3px" width="5" height="3"><path d="M0 0H4.4L2.2 2.6Z" fill="#333"/></svg>
<div class="t" style="left:767.9px;top:144.25px;color:#2a2a2a;font-size:8.45px;">Velikost mřížky:</div>
<div class="a" style="left:875.4px;top:141.9px;width:131px;height:13.8px;background:#fff;border:1px solid #b0b0b0;"></div><div class="t" style="left:875.4px;top:144.0px;width:116px;text-align:right;color:#2a2a2a;font-size:8.5px">10</div><svg style="left:996px;top:144px" width="6" height="9"><path d="M0.9 2.3L3 0.4L5.1 2.3M0.9 6.7L3 8.6L5.1 6.7" stroke="#555" stroke-width="1.1" fill="none"/></svg>
<div class="t" style="left:767.9px;top:158.55px;color:#2a2a2a;font-size:8.45px;">Zobrazit skrytá pole:</div>
<div class="a" style="left:876px;top:158.8px;width:10px;height:9.2px;background:#fff;border:1px solid #b0b0b0;border-color:#707070"></div>
<div class="a" style="left:767px;top:172px;width:238px;height:2px;background:#b8b8b8;"></div>
<div class="t" style="left:767.9px;top:182.05px;color:#2a2a2a;font-size:8.45px;">Název pole:</div>
<div class="a" style="left:875.4px;top:179.3px;width:131px;height:13.9px;background:#fff;border:1px solid #b0b0b0;"></div>
<div class="t" style="left:878.4px;top:182.25px;color:#2a2a2a;font-size:8.5px;">Objednavatel</div>
<div class="t" style="left:767.9px;top:199.75px;color:#2a2a2a;font-size:8.45px;">Zobrazovat název:</div>
<div class="a" style="left:876px;top:200.0px;width:10px;height:9.2px;background:#fff;border:1px solid #b0b0b0;border-color:#707070"></div><svg style="left:876px;top:200.00px" width="10" height="9"><path d="M1.7 4.3L3.9 6.6L8.4 1.6" stroke="#1e1e1e" stroke-width="1.5" fill="none"/></svg>
<div class="t" style="left:767.9px;top:218.75px;color:#2a2a2a;font-size:8.45px;">Databázový sloupec:</div>
<div class="a" style="left:875.4px;top:215.4px;width:108px;height:16px;background:#fff;border:1px solid #b0b0b0;"></div>
<svg style="left:880.8px;top:219.2px" width="8.3" height="8.4"><rect width="8.3" height="8.4" rx="1.3" fill="#22b455"/><path d="M1.8 2.3H6.5M1.8 4.2H6.5M1.8 6.1H4.8" stroke="#fff" stroke-width="0.9"/></svg>
<div class="t" style="left:892.2px;top:219.05px;color:#2a2a2a;font-size:8.5px;">objednavatel</div>
<svg style="left:975px;top:222.3px" width="5" height="3"><path d="M0 0H4.4L2.2 2.6Z" fill="#333"/></svg>
<div class="a" style="left:985px;top:215.4px;width:21.4px;height:16px;background:#fff;border:1px solid #b0b0b0;"></div><div class="a" style="left:992.70px;top:226.80px;width:1.1px;height:1.1px;background:#333"></div><div class="a" style="left:995.00px;top:226.80px;width:1.1px;height:1.1px;background:#333"></div><div class="a" style="left:997.30px;top:226.80px;width:1.1px;height:1.1px;background:#333"></div>
<div class="t" style="left:774.6px;top:236.45px;color:#2a2a2a;font-size:8.45px;">Vymazat při skrytí:</div>
<div class="a" style="left:862.5px;top:236.6px;width:9.4px;height:9.4px;border-radius:50%;background:#6a6a6a"></div><div class="t" style="left:862.4px;top:236.0px;width:9.4px;text-align:center;color:#f0f0f0;font-size:7.5px;font-weight:bold">?</div>
<div class="a" style="left:876px;top:236.6px;width:10px;height:9.2px;background:#fff;border:1px solid #b0b0b0;border-color:#707070"></div>
<div class="t" style="left:767.9px;top:254.25px;color:#2a2a2a;font-size:8.45px;">Výchozí hodnota:</div>
<div class="a" style="left:875.4px;top:251px;width:108px;height:15px;background:#fff;border:1px solid #b0b0b0;"></div>
<div class="a" style="left:985px;top:251px;width:21.4px;height:15px;background:#fff;border:1px solid #b0b0b0;"></div><div class="a" style="left:992.70px;top:261.40px;width:1.1px;height:1.1px;background:#333"></div><div class="a" style="left:995.00px;top:261.40px;width:1.1px;height:1.1px;background:#333"></div><div class="a" style="left:997.30px;top:261.40px;width:1.1px;height:1.1px;background:#333"></div>
<div class="t" style="left:767.9px;top:273.95px;color:#2a2a2a;font-size:8.45px;">Typ pole:</div>
<div class="a" style="left:875.4px;top:270.3px;width:103.4px;height:16.3px;background:#fff;border:1px solid #b0b0b0;"></div><div class="t" style="left:877.9px;top:274.25px;color:#2a2a2a;font-size:8.5px;">Výběr ze seznamu</div><svg style="left:969.3px;top:277.5px" width="5" height="3"><path d="M0 0H4.4L2.2 2.6Z" fill="#333"/></svg>
<div class="a" style="left:980.4px;top:270.3px;width:26px;height:16.3px;background:#fff;border:1px solid #b0b0b0;"></div>
<svg style="left:988px;top:273.5px" width="10" height="10"><path d="M1 9L6 4" stroke="#444" stroke-width="1.5"/><path d="M6.5 1V3M5.5 2H7.5M8.8 3.8V5.8M7.8 4.8H9.8M2.5 1.5V3M1.7 2.2H3.3" stroke="#444" stroke-width="0.7"/></svg>
<div class="t" style="left:774.3px;top:293.25px;color:#2a2a2a;font-size:8.45px;">Odkazovaný seznam:</div>
<div class="a" style="left:875.4px;top:290.5px;width:131px;height:14.4px;background:#fff;border:1px solid #b0b0b0;"></div><div class="t" style="left:877.9px;top:293.25px;color:#2a2a2a;font-size:8.5px;">Uživatelé</div><svg style="left:996.9px;top:296.5px" width="5" height="3"><path d="M0 0H4.4L2.2 2.6Z" fill="#333"/></svg>
<div class="t" style="left:774.3px;top:310.65px;color:#2a2a2a;font-size:8.45px;">Odkazovaný sloupec:</div>
<div class="a" style="left:875.4px;top:308.2px;width:131px;height:13.8px;background:#fff;border:1px solid #b0b0b0;"></div><div class="t" style="left:877.9px;top:310.65px;color:#2a2a2a;font-size:8.5px;">Celé jméno uživatele</div><svg style="left:996.9px;top:313.9px" width="5" height="3"><path d="M0 0H4.4L2.2 2.6Z" fill="#333"/></svg>
<div class="t" style="left:774.3px;top:328.25px;color:#2a2a2a;font-size:8.45px;">Filtr pro rychlý výběr:</div>
<div class="a" style="left:875.4px;top:326.2px;width:131px;height:14.1px;background:#fff;border:1px solid #b0b0b0;"></div><svg style="left:996.9px;top:332.0px" width="5" height="3"><path d="M0 0H4.4L2.2 2.6Z" fill="#333"/></svg>
<div class="t" style="left:774.3px;top:347.65px;color:#2a2a2a;font-size:8.45px;">Odkládací sloupec:</div>
<div class="a" style="left:875.4px;top:344.1px;width:108px;height:16.1px;background:#fff;border:1px solid #b0b0b0;"></div><svg style="left:973.9px;top:350.9px" width="5" height="3"><path d="M0 0H4.4L2.2 2.6Z" fill="#333"/></svg>
<div class="a" style="left:985px;top:344.1px;width:21.4px;height:16.1px;background:#fff;border:1px solid #b0b0b0;"></div><div class="a" style="left:992.70px;top:355.60px;width:1.1px;height:1.1px;background:#b04040"></div><div class="a" style="left:995.00px;top:355.60px;width:1.1px;height:1.1px;background:#b04040"></div><div class="a" style="left:997.30px;top:355.60px;width:1.1px;height:1.1px;background:#b04040"></div>
<div class="t" style="left:774.3px;top:365.95px;color:#2a2a2a;font-size:8.45px;">Maximálně položek:</div>
<div class="a" style="left:862.5px;top:366.1px;width:9.4px;height:9.4px;border-radius:50%;background:#6a6a6a"></div><div class="t" style="left:862.4px;top:365.5px;width:9.4px;text-align:center;color:#f0f0f0;font-size:7.5px;font-weight:bold">?</div>
<div class="a" style="left:875.4px;top:363.8px;width:131px;height:14.3px;background:#fff;border:1px solid #b0b0b0;"></div><div class="t" style="left:875.4px;top:365.9px;width:116px;text-align:right;color:#2a2a2a;font-size:8.5px">20</div><svg style="left:996px;top:366px" width="6" height="9"><path d="M0.9 2.3L3 0.4L5.1 2.3M0.9 6.7L3 8.6L5.1 6.7" stroke="#555" stroke-width="1.1" fill="none"/></svg>
<div class="t" style="left:767.1px;top:384.45px;color:#2a2a2a;font-size:8.45px;">Stránka:</div>
<div class="a" style="left:875.4px;top:381.7px;width:131px;height:14.4px;background:#fff;border:1px solid #b0b0b0;"></div><svg style="left:996.9px;top:387.7px" width="5" height="3"><path d="M0 0H4.4L2.2 2.6Z" fill="#333"/></svg>
<div class="t" style="left:767.1px;top:401.05px;color:#2a2a2a;font-size:8.45px;">Viditelné:</div>
<div class="a" style="left:876px;top:401.3px;width:10px;height:9.2px;background:#fff;border:1px solid #b0b0b0;border-color:#707070"></div><svg style="left:876px;top:401.30px" width="10" height="9"><path d="M1.7 4.3L3.9 6.6L8.4 1.6" stroke="#1e1e1e" stroke-width="1.5" fill="none"/></svg>
<div class="t" style="left:767.1px;top:417.05px;color:#2a2a2a;font-size:8.45px;">Povinné:</div>
<div class="a" style="left:876px;top:417.3px;width:10px;height:9.2px;background:#fff;border:1px solid #b0b0b0;border-color:#707070"></div><svg style="left:876px;top:417.30px" width="10" height="9"><path d="M1.7 4.3L3.9 6.6L8.4 1.6" stroke="#1e1e1e" stroke-width="1.5" fill="none"/></svg>
<div class="t" style="left:767.1px;top:433.35px;color:#2a2a2a;font-size:8.45px;">Povolené:</div>
<div class="a" style="left:876px;top:433.6px;width:10px;height:9.2px;background:#fff;border:1px solid #b0b0b0;border-color:#707070"></div><svg style="left:876px;top:433.60px" width="10" height="9"><path d="M1.7 4.3L3.9 6.6L8.4 1.6" stroke="#1e1e1e" stroke-width="1.5" fill="none"/></svg>
<div class="t" style="left:767.6px;top:450.05px;color:#2a2a2a;font-size:8.45px;">Horizontální uchycení:</div>
<div class="a" style="left:875.4px;top:447.7px;width:131px;height:14.2px;background:#fff;border:1px solid #b0b0b0;"></div><div class="t" style="left:877.9px;top:450.35px;color:#2a2a2a;font-size:8.5px;">Vlevo</div><svg style="left:996.9px;top:453.6px" width="5" height="3"><path d="M0 0H4.4L2.2 2.6Z" fill="#333"/></svg>
<div class="t" style="left:774.8px;top:468.55px;color:#2a2a2a;font-size:8.45px;">Pozice zleva:</div>
<div class="a" style="left:875.4px;top:465.6px;width:131px;height:14.2px;background:#fff;border:1px solid #b0b0b0;"></div><div class="t" style="left:875.4px;top:467.7px;width:116px;text-align:right;color:#2a2a2a;font-size:8.5px">10</div><svg style="left:996px;top:468px" width="6" height="9"><path d="M0.9 2.3L3 0.4L5.1 2.3M0.9 6.7L3 8.6L5.1 6.7" stroke="#555" stroke-width="1.1" fill="none"/></svg>
<div class="t" style="left:774.8px;top:486.75px;color:#2a2a2a;font-size:8.45px;">Pozice zprava:</div>
<div class="a" style="left:875.4px;top:483.5px;width:131px;height:14.3px;background:#fff;border:1px solid #b0b0b0;border-color:#c4c4c4"></div><div class="t" style="left:875.4px;top:485.6px;width:116px;text-align:right;color:#a9a9a9;font-size:8.5px">410</div><svg style="left:996px;top:486px" width="6" height="9"><path d="M0.9 2.3L3 0.4L5.1 2.3M0.9 6.7L3 8.6L5.1 6.7" stroke="#b4b4b4" stroke-width="1.1" fill="none"/></svg>
<div class="t" style="left:774.8px;top:504.65px;color:#2a2a2a;font-size:8.45px;">Šířka:</div>
<div class="a" style="left:875.4px;top:501.5px;width:131px;height:14.3px;background:#fff;border:1px solid #b0b0b0;"></div><div class="t" style="left:875.4px;top:503.6px;width:116px;text-align:right;color:#2a2a2a;font-size:8.5px">250</div><svg style="left:996px;top:504px" width="6" height="9"><path d="M0.9 2.3L3 0.4L5.1 2.3M0.9 6.7L3 8.6L5.1 6.7" stroke="#555" stroke-width="1.1" fill="none"/></svg>
<div class="t" style="left:767.6px;top:522.65px;color:#2a2a2a;font-size:8.45px;">Vertikální uchycení:</div>
<div class="a" style="left:875.4px;top:519.6px;width:131px;height:14.3px;background:#fff;border:1px solid #b0b0b0;"></div><div class="t" style="left:877.9px;top:522.25px;color:#2a2a2a;font-size:8.5px;">Nahoře</div><svg style="left:996.9px;top:525.5px" width="5" height="3"><path d="M0 0H4.4L2.2 2.6Z" fill="#333"/></svg>
<div class="t" style="left:774.8px;top:540.85px;color:#2a2a2a;font-size:8.45px;">Pozice shora:</div>
<div class="a" style="left:875.4px;top:537.6px;width:131px;height:14.3px;background:#fff;border:1px solid #b0b0b0;"></div><div class="t" style="left:875.4px;top:539.7px;width:116px;text-align:right;color:#2a2a2a;font-size:8.5px">290</div><svg style="left:996px;top:540px" width="6" height="9"><path d="M0.9 2.3L3 0.4L5.1 2.3M0.9 6.7L3 8.6L5.1 6.7" stroke="#555" stroke-width="1.1" fill="none"/></svg>
<div class="t" style="left:774.8px;top:558.75px;color:#2a2a2a;font-size:8.45px;">Pozice zdola:</div>
<div class="a" style="left:875.4px;top:555.6px;width:131px;height:14.3px;background:#fff;border:1px solid #b0b0b0;border-color:#c4c4c4"></div><div class="t" style="left:875.4px;top:557.7px;width:116px;text-align:right;color:#a9a9a9;font-size:8.5px">344</div><svg style="left:996px;top:558px" width="6" height="9"><path d="M0.9 2.3L3 0.4L5.1 2.3M0.9 6.7L3 8.6L5.1 6.7" stroke="#b4b4b4" stroke-width="1.1" fill="none"/></svg>
<div class="t" style="left:774.8px;top:576.65px;color:#2a2a2a;font-size:8.45px;">Výška:</div>
<div class="a" style="left:875.4px;top:573.7px;width:131px;height:14.8px;background:#fff;border:1px solid #b0b0b0;"></div><div class="t" style="left:875.4px;top:576.1px;width:116px;text-align:right;color:#2a2a2a;font-size:8.5px">40</div><svg style="left:996px;top:577px" width="6" height="9"><path d="M0.9 2.3L3 0.4L5.1 2.3M0.9 6.7L3 8.6L5.1 6.7" stroke="#555" stroke-width="1.1" fill="none"/></svg>
<div class="a" style="left:5px;top:121px;width:1013px;height:2.5px;background:linear-gradient(#c4c4c4,#c4c4c4 30%,rgba(230,230,230,0.6) 60%,rgba(255,255,255,0));"></div>
</body></html>
